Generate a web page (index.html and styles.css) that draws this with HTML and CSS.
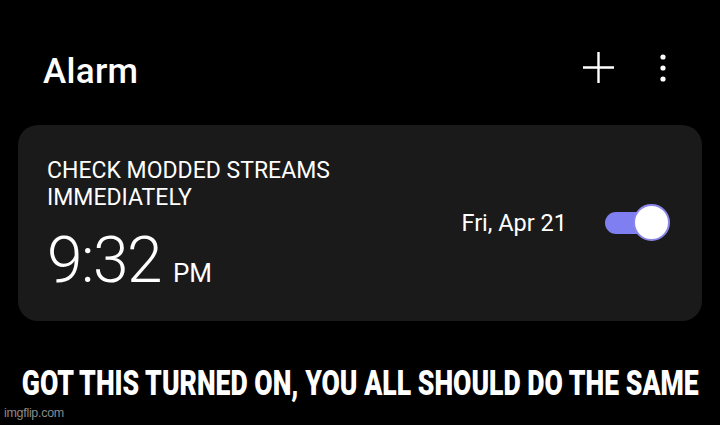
FILE: index.html
```html
<!DOCTYPE html>
<html>
<head>
<meta charset="utf-8">
<link rel="stylesheet" href="styles.css">
</head>
<body>
<div class="screen">
  <header class="topbar">
    <h1 class="title">Alarm</h1>
    <div class="actions">
      <svg class="plus" width="33" height="33" viewBox="0 0 33 33"><path d="M16.5 1V32M1 16.5H32" stroke="#fff" stroke-width="2.4" fill="none"/></svg>
      <svg class="more" width="8" height="30" viewBox="0 0 8 30"><circle cx="4" cy="4" r="2.6" fill="#fff"/><circle cx="4" cy="15" r="2.6" fill="#fff"/><circle cx="4" cy="26" r="2.6" fill="#fff"/></svg>
    </div>
  </header>
  <section class="card">
    <div class="info">
      <div class="label">CHECK MODDED STREAMS<br>IMMEDIATELY</div>
      <div class="time"><span class="hm">9:32</span><span class="ampm">PM</span></div>
    </div>
    <div class="side">
      <span class="date">Fri, Apr 21</span>
      <span class="toggle"><span class="knob"></span></span>
    </div>
  </section>
  <div class="caption"><span class="caption-text">GOT THIS TURNED ON, YOU ALL SHOULD DO THE SAME</span></div>
  <div class="watermark">imgflip.com</div>
</div>
</body>
</html>
```
FILE: styles.css
```css
html, body {
  margin: 0;
  padding: 0;
  background: #000;
}
.screen {
  width: 720px;
  height: 425px;
  background: #000;
  color: #fff;
  font-family: Roboto, "Noto Sans", sans-serif;
  display: flex;
  flex-direction: column;
  overflow: hidden;
}
.topbar {
  display: flex;
  align-items: center;
  justify-content: space-between;
  height: 70px;
  margin-top: 36px;
  padding: 0 53px 0 43px;
}
.title {
  margin: 0;
  font-size: 35px;
  font-weight: 500;
  line-height: 1;
  letter-spacing: 0.3px;
}
.actions {
  display: flex;
  align-items: center;
  gap: 44px;
  padding-bottom: 7px;
}
.card {
  margin: 19px 18px 0;
  height: 196px;
  background: #1a1a1a;
  border-radius: 20px;
  display: flex;
  justify-content: space-between;
  padding: 0 33px 0 29px;
}
.info {
  padding-top: 32px;
}
.label {
  font-size: 23px;
  line-height: 27px;
}
.time {
  margin-top: 18px;
  display: flex;
  align-items: baseline;
}
.hm {
  font-size: 64px;
  font-weight: 300;
  line-height: 1;
  letter-spacing: -1.5px;
}
.ampm {
  font-size: 26px;
  margin-left: 12px;
}
.side {
  display: flex;
  align-items: center;
  gap: 38px;
}
.date {
  font-size: 23.5px;
}
.toggle {
  position: relative;
  width: 64px;
  height: 22px;
  border-radius: 11px;
  background: #7f7ff1;
}
.knob {
  position: absolute;
  right: -1px;
  top: -8px;
  width: 33px;
  height: 33px;
  border-radius: 50%;
  background: #fff;
  border: 2px solid #8a86e8;
}
.caption {
  margin-top: 43px;
  height: 40px;
  display: flex;
  justify-content: center;
  white-space: nowrap;
}
.caption-text {
  display: inline-block;
  font-family: Roboto, "DejaVu Sans", sans-serif;
  font-weight: 900;
  font-size: 35px;
  line-height: 40px;
  color: #fff;
  transform: scaleX(0.76);
}
.watermark {
  margin-top: 2px;
  padding-left: 4px;
  font-family: "Liberation Sans", Arial, sans-serif;
  font-size: 12.5px;
  color: #8a8a8a;
  letter-spacing: -0.3px;
}
```
